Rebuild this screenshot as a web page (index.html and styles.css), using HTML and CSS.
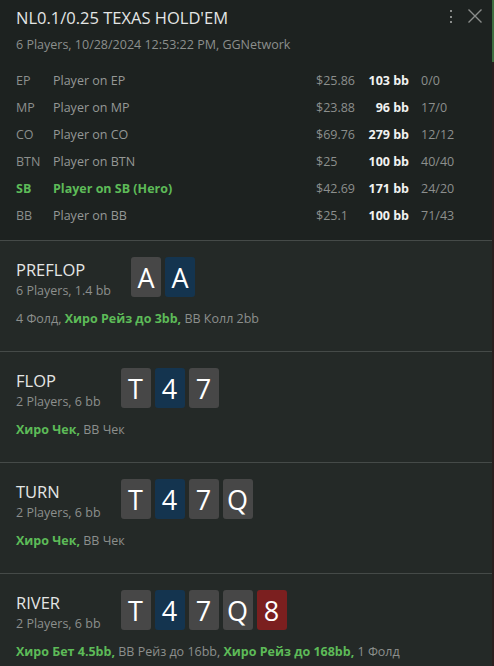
FILE: index.html
```html
<!DOCTYPE html>
<html>
<head>
<meta charset="utf-8">
<link rel="stylesheet" href="styles.css">
</head>
<body>
<div class="app">
  <div class="main">
    <header class="head">
      <div class="head-top">
        <h1 class="title">NL0.1/0.25 TEXAS HOLD'EM</h1>
        <div class="tools">
          <svg class="kebab" width="6" height="18" viewBox="0 0 6 18"><rect x="2" y="2" width="2" height="2" fill="#8a8d8b"/><rect x="2" y="8" width="2" height="2" fill="#8a8d8b"/><rect x="2" y="13" width="2" height="2" fill="#8a8d8b"/></svg>
          <svg class="close" width="16" height="16" viewBox="0 0 16 16"><path d="M1.5 1.5 L14.5 14.5 M14.5 1.5 L1.5 14.5" stroke="#8a8d8b" stroke-width="1.4" fill="none"/></svg>
        </div>
      </div>
      <div class="meta">6 Players, 10/28/2024 12:53:22 PM, GGNetwork</div>
      <div class="players">
        <div class="prow"><span class="pos">EP</span><span class="name">Player on EP</span><span class="money">$25.86</span><span class="bb">103 bb</span><span class="stat">0/0</span></div>
        <div class="prow"><span class="pos">MP</span><span class="name">Player on MP</span><span class="money">$23.88</span><span class="bb">96 bb</span><span class="stat">17/0</span></div>
        <div class="prow"><span class="pos">CO</span><span class="name">Player on CO</span><span class="money">$69.76</span><span class="bb">279 bb</span><span class="stat">12/12</span></div>
        <div class="prow"><span class="pos">BTN</span><span class="name">Player on BTN</span><span class="money">$25</span><span class="bb">100 bb</span><span class="stat">40/40</span></div>
        <div class="prow hero"><span class="pos">SB</span><span class="name">Player on SB (Hero)</span><span class="money">$42.69</span><span class="bb">171 bb</span><span class="stat">24/20</span></div>
        <div class="prow"><span class="pos">BB</span><span class="name">Player on BB</span><span class="money">$25.1</span><span class="bb">100 bb</span><span class="stat">71/43</span></div>
      </div>
    </header>

    <section class="street">
      <div class="street-top">
        <div class="street-info">
          <div class="street-name">PREFLOP</div>
          <div class="street-sub">6 Players, 1.4 bb</div>
        </div>
        <div class="cards">
          <span class="card gray">A</span><span class="card blue">A</span>
        </div>
      </div>
      <div class="actions">4 Фолд, <b class="hero-act">Хиро Рейз до 3bb,</b> BB Колл 2bb</div>
    </section>

    <section class="street">
      <div class="street-top">
        <div class="street-info">
          <div class="street-name">FLOP</div>
          <div class="street-sub">2 Players, 6 bb</div>
        </div>
        <div class="cards">
          <span class="card gray">T</span><span class="card blue">4</span><span class="card gray">7</span>
        </div>
      </div>
      <div class="actions"><b class="hero-act">Хиро Чек,</b> BB Чек</div>
    </section>

    <section class="street">
      <div class="street-top">
        <div class="street-info">
          <div class="street-name">TURN</div>
          <div class="street-sub">2 Players, 6 bb</div>
        </div>
        <div class="cards">
          <span class="card gray">T</span><span class="card blue">4</span><span class="card gray">7</span><span class="card gray">Q</span>
        </div>
      </div>
      <div class="actions"><b class="hero-act">Хиро Чек,</b> BB Чек</div>
    </section>

    <section class="street">
      <div class="street-top">
        <div class="street-info">
          <div class="street-name">RIVER</div>
          <div class="street-sub">2 Players, 6 bb</div>
        </div>
        <div class="cards">
          <span class="card gray">T</span><span class="card blue">4</span><span class="card gray">7</span><span class="card gray">Q</span><span class="card red">8</span>
        </div>
      </div>
      <div class="actions"><b class="hero-act">Хиро Бет 4.5bb,</b> BB Рейз до 16bb, <b class="hero-act">Хиро Рейз до 168bb,</b> 1 Фолд</div>
    </section>
  </div>
  <div class="scrollbar"><div class="thumb"></div></div>
</div>
</body>
</html>
```

FILE: styles.css
```css
* { box-sizing: border-box; }
html, body {
  margin: 0;
  padding: 0;
  background: #242927;
  height: 666px;
  overflow: hidden;
}
body {
  font-family: "Open Sans", "Noto Sans", sans-serif;
  font-size: 12.5px;
  color: #8c8f8d;
}
.app {
  display: flex;
  width: 494px;
  height: 666px;
}
.main {
  flex: 1;
  min-width: 0;
  display: flex;
  flex-direction: column;
}
.scrollbar {
  width: 2px;
  background: #2a1e1e;
  display: flex;
  flex-direction: column;
}
.thumb {
  height: 62px;
  background: #3f6f40;
}
.head {
  background: #1d2220;
  padding: 6px 16px 11px 16px;
}
.head-top {
  display: flex;
  justify-content: space-between;
  align-items: flex-start;
}
.title {
  margin: 0;
  font-weight: 400;
  font-size: 16.5px;
  line-height: 24px;
  color: #e4e6e5;
}
.tools {
  display: flex;
  align-items: flex-start;
  gap: 13px;
  margin-top: -1px;
  margin-right: -7px;
}
.kebab { display: block; margin-top: 3px; }
.close { display: block; margin-top: 3px; }
.meta {
  line-height: 18px;
  margin-top: 6px;
  color: #8c8f8d;
}
.players {
  margin-top: 13px;
  display: flex;
  flex-direction: column;
}
.prow {
  display: flex;
  height: 27px;
  align-items: center;
  white-space: nowrap;
}
.pos { width: 37px; }
.name { width: 263px; color: #959896; }
.money { width: 44px; }
.bb {
  width: 49px;
  text-align: right;
  font-weight: 700;
  color: #f1f2f1;
}
.stat { padding-left: 12px; }
.prow.hero .pos, .prow.hero .name {
  color: #5dbb58;
  font-weight: 700;
}
.street {
  border-top: 1px solid #454a48;
  padding: 16px 16px 23px 16px;
}
.street-top {
  display: flex;
  align-items: flex-start;
}
.street-info {
  padding-top: 2px;
  margin-right: 20px;
}
.street-name {
  font-size: 16.5px;
  line-height: 22px;
  color: #e4e6e5;
}
.street-sub {
  line-height: 20px;
  color: #8c8f8d;
}
.cards {
  display: flex;
  gap: 4px;
}
.card {
  width: 30px;
  height: 40px;
  border-radius: 3px;
  display: flex;
  align-items: center;
  justify-content: center;
  font-size: 27px;
  color: #ffffff;
  line-height: 1;
}
.card.gray { background: #474747; }
.card.blue { background: #14344f; }
.card.red { background: #7b1f1f; }
.actions {
  margin-top: 9px;
  line-height: 18px;
  white-space: nowrap;
  color: #8c8f8d;
}
.hero-act {
  color: #5dbb58;
  font-weight: 700;
}
```
